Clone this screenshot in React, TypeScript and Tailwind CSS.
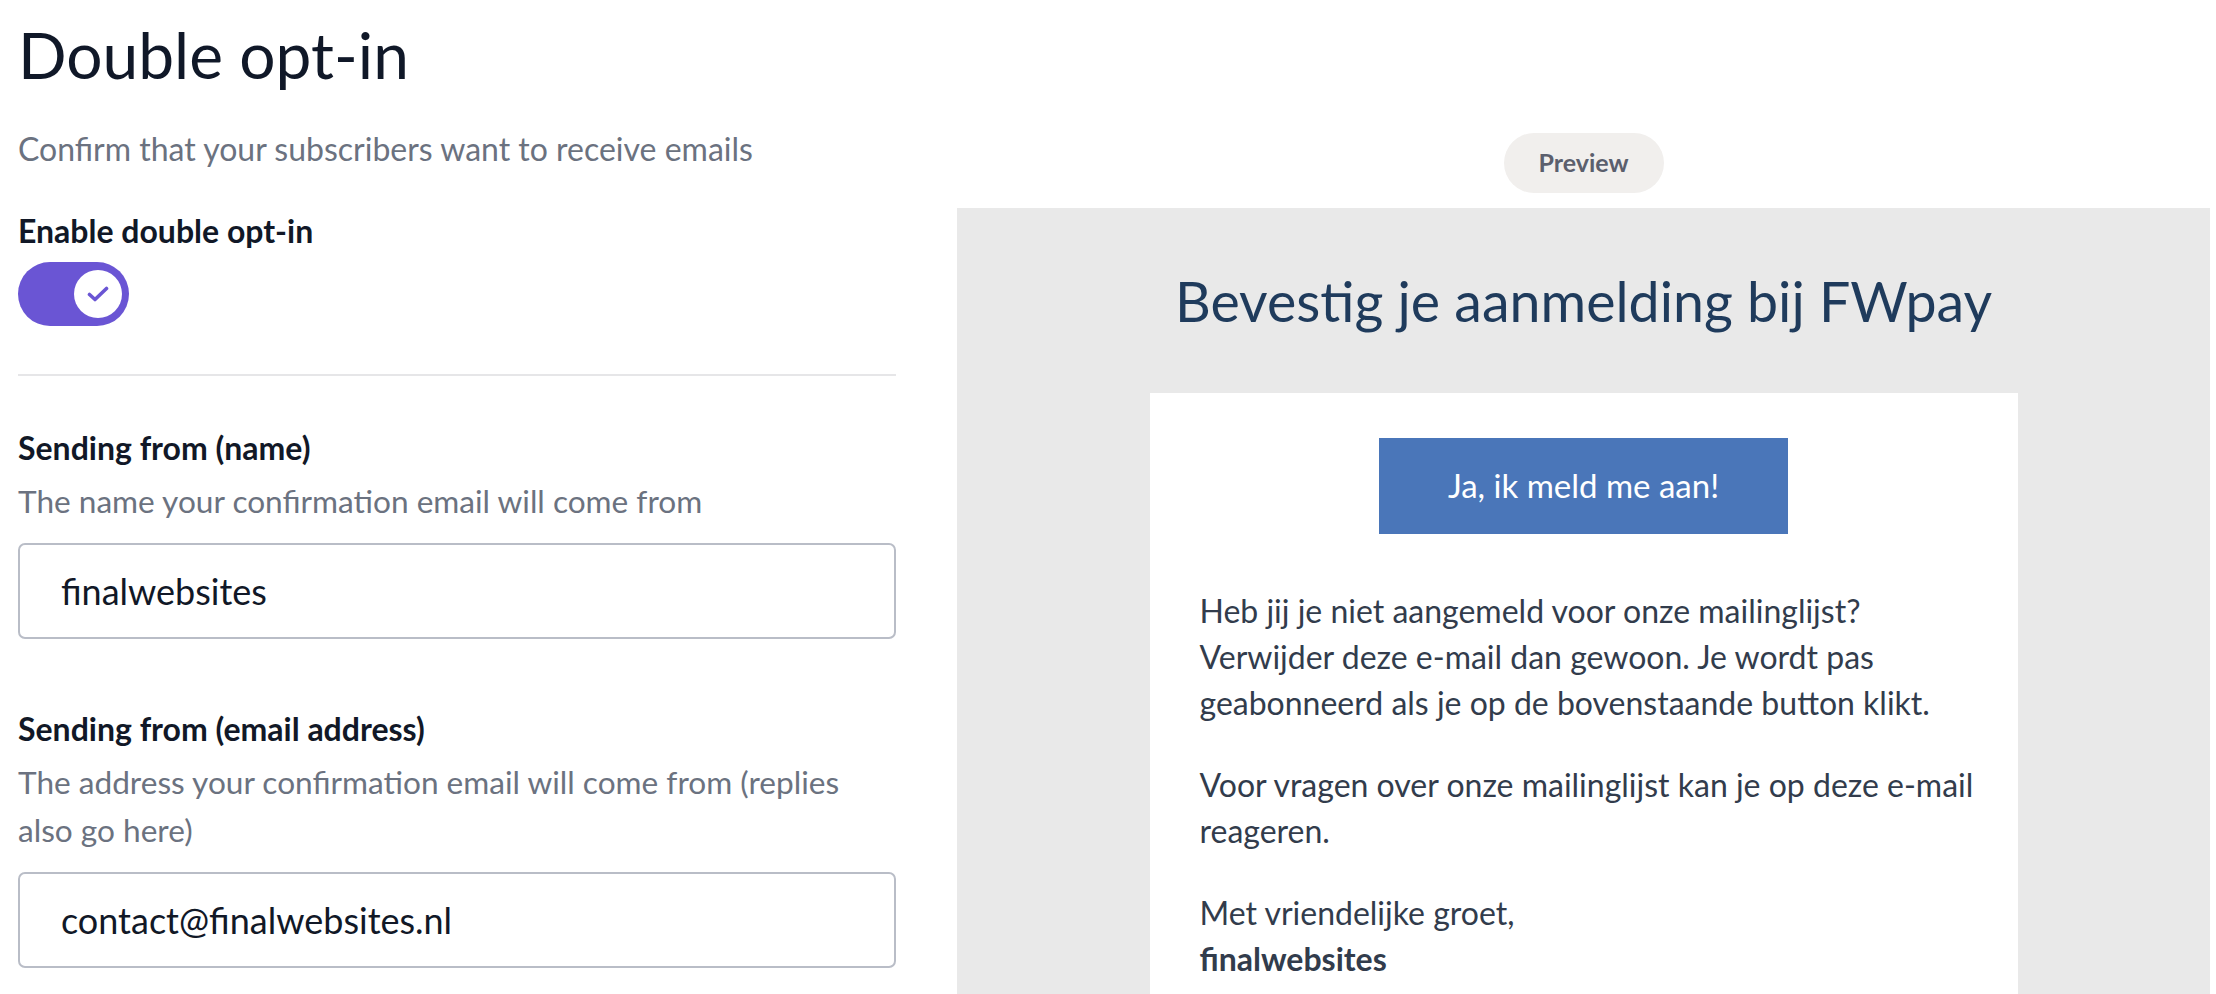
import React from "react";

const font = { fontFamily: "Lato, 'Noto Sans', sans-serif" };

const Field = ({
  label,
  hint,
  value,
}: {
  label: string;
  hint: string;
  value: string;
}) => (
  <div className="flex flex-col">
    <label className="text-[32px] leading-[44px] font-bold text-[#111827]">{label}</label>
    <p className="mt-[7px] text-[31.6px] leading-[48px] text-[#6b7280]">{hint}</p>
    <div className="mt-[18px] h-[96px] rounded-[7px] border-2 border-[#b9bdc7] flex items-center px-[41px]">
      <span className="text-[36px] text-[#111827]">{value}</span>
    </div>
  </div>
);

export default function App() {
  return (
    <div className="h-[994px] w-full overflow-hidden bg-white flex pl-[18px] pr-[6px]" style={font}>
      {/* settings column */}
      <div className="w-[878px] shrink-0 flex flex-col pt-[15px]">
        <h1 className="text-[64px] leading-[80px] text-[#101828]">Double opt-in</h1>
        <p className="mt-[31px] text-[32px] leading-[46px] text-[#6b7280]">
          Confirm that your subscribers want to receive emails
        </p>
        <div className="mt-[36px] text-[32px] leading-[46px] font-bold text-[#111827]">
          Enable double opt-in
        </div>
        <button className="mt-[8px] w-[111px] h-[64px] rounded-full bg-[#6a55d4] flex items-center justify-end pr-[7px]">
          <span className="w-[48px] h-[48px] rounded-full bg-white flex items-center justify-center">
            <svg width="22" height="16" viewBox="0 0 22 16" fill="none">
              <path d="M2.5 8.5 L8 13.5 L19.5 2.5" stroke="#6a55d4" strokeWidth="3.6" strokeLinecap="round" strokeLinejoin="round" />
            </svg>
          </span>
        </button>
        <div className="mt-[48px] h-[2px] bg-[#e6e6e8]" />
        <div className="mt-[50px] flex flex-col gap-[68px]">
          <Field
            label="Sending from (name)"
            hint="The name your confirmation email will come from"
            value="finalwebsites"
          />
          <Field
            label="Sending from (email address)"
            hint="The address your confirmation email will come from (replies also go here)"
            value="contact@finalwebsites.nl"
          />
        </div>
      </div>

      {/* preview column */}
      <div className="ml-[61px] flex-1 flex flex-col items-center pt-[133px]">
        <div className="h-[60px] w-[160px] rounded-full bg-[#f1efed] flex items-center justify-center text-[25px] font-bold text-[#5b5f6d]">
          Preview
        </div>
        <div className="mt-[15px] w-full flex-1 bg-[#e9e9e9] flex flex-col items-center pt-[59px]">
          <h2 className="text-[55.5px] leading-[68px] text-[#1f3b5c]">Bevestig je aanmelding bij FWpay</h2>
          <div className="mt-[58px] w-[868px] flex-1 bg-white px-[50px] pt-[45px]">
            <div className="flex justify-center">
              <div className="w-[409px] h-[96px] bg-[#4a76b9] flex items-center justify-center text-white text-[33px]">
                Ja, ik meld me aan!
              </div>
            </div>
            <div className="mt-[54px] text-[32px] leading-[46px] text-[#323c4c] whitespace-nowrap flex flex-col gap-[36px]">
              <p>
                Heb jij je niet aangemeld voor onze mailinglijst?
                <br />
                Verwijder deze e-mail dan gewoon. Je wordt pas
                <br />
                geabonneerd als je op de bovenstaande button klikt.
              </p>
              <p>
                Voor vragen over onze mailinglijst kan je op deze e-mail
                <br />
                reageren.
              </p>
              <p>
                Met vriendelijke groet,
                <br />
                <span className="font-bold">finalwebsites</span>
              </p>
            </div>
          </div>
        </div>
      </div>
    </div>
  );
}
